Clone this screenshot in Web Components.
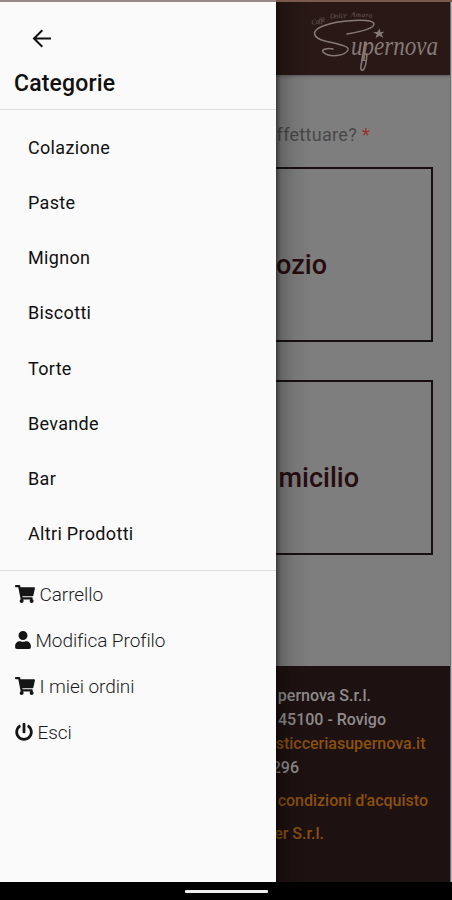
<!DOCTYPE html>
<html lang="it">
<head>
<meta charset="utf-8">
<title>Supernova</title>
<style>
html,body{margin:0;padding:0;background:#000}
body{width:452px;height:900px;overflow:hidden;font-family:Roboto,"Liberation Sans",sans-serif}
</style>
</head>
<body>
<app-shell>
  <side-drawer slot="drawer" heading="Categorie">
    <category-item>Colazione</category-item>
    <category-item>Paste</category-item>
    <category-item>Mignon</category-item>
    <category-item>Biscotti</category-item>
    <category-item>Torte</category-item>
    <category-item>Bevande</category-item>
    <category-item>Bar</category-item>
    <category-item>Altri Prodotti</category-item>
    <account-link slot="account" icon="cart">Carrello</account-link>
    <account-link slot="account" icon="user">Modifica Profilo</account-link>
    <account-link slot="account" icon="cart">I miei ordini</account-link>
    <account-link slot="account" icon="power">Esci</account-link>
  </side-drawer>
  <shop-page slot="page"></shop-page>
</app-shell>

<script>
const define = (name, html, setup) => customElements.define(name, class extends HTMLElement {
  constructor() {
    super();
    this.attachShadow({ mode: "open" }).innerHTML = html;
  }
  connectedCallback() { if (setup) setup(this, this.shadowRoot); }
});

const icons = {
  cart: ["0 0 576 512", 20, "M528.12 301.319l47.273-208C578.806 78.301 567.391 64 551.99 64H159.208l-9.166-44.81C147.758 8.021 137.93 0 126.529 0H24C10.745 0 0 10.745 0 24v16c0 13.255 10.745 24 24 24h69.883l70.248 343.435C147.325 417.1 136 435.222 136 456c0 30.928 25.072 56 56 56s56-25.072 56-56c0-15.674-6.447-29.835-16.824-40h209.647C430.447 426.165 424 440.326 424 456c0 30.928 25.072 56 56 56s56-25.072 56-56c0-22.172-12.888-41.332-31.579-50.405l5.517-24.276c3.413-15.018-8.002-29.319-23.403-29.319H218.117l-6.545-32h293.145c11.206 0 20.92-7.754 23.403-18.681z"],
  user: ["0 0 448 512", 16, "M224 256c70.7 0 128-57.3 128-128S294.7 0 224 0 96 57.3 96 128s57.3 128 128 128zm89.6 32h-16.7c-22.2 10.2-46.9 16-72.9 16s-50.6-5.8-72.9-16h-16.7C60.2 288 0 348.2 0 422.4V464c0 26.5 21.5 48 48 48h352c26.5 0 48-21.5 48-48v-41.6c0-74.2-60.2-134.4-134.4-134.4z"],
  power: ["0 0 512 512", 18, "M400 54.1c63 45 104 118.6 104 201.9 0 136.8-110.8 247.7-247.5 248C120 504.3 8.2 393 8 256.4 7.9 173.1 48.9 99.3 111.8 54.2c11.7-8.3 28-4.8 35 7.7L162.6 90c5.9 10.5 3.1 23.8-6.6 31-41.5 30.8-68 79.6-68 134.9-.1 92.3 74.5 168.1 168 168.1 91.6 0 168.6-74.2 168-169.1-.3-51.8-24.7-101.8-68.1-134-9.7-7.2-12.4-20.5-6.5-30.9l15.8-28.1c7-12.4 23.2-16.1 34.8-7.8zM296 264V24c0-13.3-10.7-24-24-24h-32c-13.3 0-24 10.7-24 24v240c0 13.3 10.7 24 24 24h32c13.3 0 24-10.7 24-24z"]
};

define("app-shell", `<style>
:host{display:flex;flex-direction:column;width:452px;height:900px;background:#000}
.top{height:2px;flex:none;background:linear-gradient(90deg,#998889 276px,#7c5a4b 276px)}
.body{height:880px;flex:none;display:grid;grid-template-columns:276px 174px 2px}
.edge{background:linear-gradient(90deg,#6f6f6f 1px,#b8b8b8 1px)}
.nav{flex:1;display:flex;justify-content:center;align-items:center;padding-top:1px}
.nav i{width:83px;height:3px;background:#eee;border-radius:1px}
</style><div class="top"></div><div class="body"><slot name="drawer"></slot><slot name="page"></slot><div class="edge"></div></div><div class="nav"><i></i></div>`);

define("side-drawer", `<style>
:host{display:flex;flex-direction:column;box-sizing:border-box;background:#fafafa;color:#111;min-width:0}
.back{display:block;width:20px;height:20px;margin:27px 0 0 32px}
h1{margin:21px 0 0 14px;font-size:23px;line-height:28px;font-weight:500;letter-spacing:.15px}
.cats{margin-top:11px;border-top:1px solid #dedede;border-bottom:1px solid #dedede;padding:10px 0 9px 28px;height:441px;display:flex;flex-direction:column}
.acc{display:flex;flex-direction:column;padding-left:14.5px}
</style>
<svg class="back" viewBox="0 0 20 20" fill="none" stroke="#111" stroke-width="2"><path d="M19 9.5H2.500M10.300 1.200L2 9.500l8.300 8.300"/></svg>
<h1></h1><div class="cats"><slot></slot></div><div class="acc"><slot name="account"></slot></div>`,
(el, r) => { r.querySelector("h1").textContent = el.getAttribute("heading"); });

define("category-item", `<style>
:host{display:flex;align-items:center;height:55.15px;flex:none;font-size:18px;letter-spacing:.32px;color:#111}
</style><span><slot></slot></span>`);

define("account-link", `<style>
:host{display:flex;align-items:center;height:46px;gap:5px;font-size:19px;letter-spacing:-.08px;font-weight:300;color:#1c1c1c;white-space:nowrap}
svg{height:18px;flex:none;fill:#151515}
</style><svg><path/></svg><span><slot></slot></span>`,
(el, r) => {
  const [box, w, d] = icons[el.getAttribute("icon")];
  const s = r.querySelector("svg");
  s.setAttribute("viewBox", box);
  s.style.width = w + "px";
  s.firstElementChild.setAttribute("d", d);
});

define("brand-logo", `<style>:host{display:block}svg{display:block}</style>
<svg width="174" height="73" viewBox="276 2 174 73" fill="none" stroke="#857a79" stroke-linecap="round">
<path stroke-width="1.5" d="M347 34C359 32 374 29 374 24C373 18 338 20 323 26C310 31 313 38 325 41C337 44 350 46 348 50C345 56 329 58 323 52C321 49 328 48 333 49"/>
<g fill="#857a79" stroke="none"><path d="M379.500 28.500L380.500 32.200L384.500 31.500L381.600 34.200L383.500 38L379.500 35.800L375.500 38.300L376.800 34.200L373 32.300L377.300 32Z"/>
<text x="351" y="55" font-family="Liberation Serif" font-style="italic" font-size="27" textLength="87" lengthAdjust="spacingAndGlyphs">upernova</text>
<g fill="#6c5f5d"><text transform="translate(312 25) rotate(-14)" font-family="Liberation Serif" font-style="italic" font-size="7" textLength="14">Caffè</text>
<text transform="translate(330 18.500) rotate(-4)" font-family="Liberation Serif" font-style="italic" font-size="7" textLength="17">Dolce</text>
<text transform="translate(351 16.500) rotate(3)" font-family="Liberation Serif" font-style="italic" font-size="7" textLength="21">Amaro</text></g></g>
<path stroke-width="1.6" d="M365 42L361 66Q360 71 363 70Q366 68 367 54"/>
</svg>`);

define("choice-box", `<style>
:host{display:flex;align-items:center;box-sizing:border-box;height:175px;width:157px;border:2px solid #180f10;border-left:0;color:#270c10;font-size:27px;font-weight:500;overflow:hidden;white-space:nowrap}
div{width:var(--end);display:flex;justify-content:flex-end;padding-top:20px}
</style><div><slot></slot></div>`);

define("footer-line", `<style>
:host{display:flex;justify-content:flex-end;width:var(--end);height:24px;line-height:24px;font-size:16px;font-weight:500;color:#8f8c8c;white-space:nowrap}
:host([link]){color:#8b5208}
</style><span><slot></slot></span>`);

define("shop-page", `<style>
:host{display:flex;flex-direction:column;background:#7e7e7e;overflow:hidden;position:relative}
header{height:73px;flex:none;background:#291815;box-shadow:0 1px 3px #3338}
main{flex:1;display:flex;flex-direction:column}
.q{display:flex;justify-content:flex-end;width:94px;margin-top:48px;height:24px;line-height:24px;font-size:18px;letter-spacing:.3px;white-space:nowrap;color:#484848;gap:5px}
.q b{color:#9c3029;font-weight:400}
choice-box.a{margin-top:20px}
choice-box.b{margin-top:38px}
footer{height:198px;flex:none;background:#1e1111;padding-top:18px;display:flex;flex-direction:column}
.gap{margin-top:9px}
.shade{position:absolute;inset:0 auto 0 0;width:36px;background:linear-gradient(90deg,#0008,#0003 5px,#0001 18px,#0000)}
</style>
<header><brand-logo></brand-logo></header>
<main><div class="q"><span>effettuare?</span><b>*</b></div>
<choice-box class="a" style="--end:51px">ozio</choice-box>
<choice-box class="b" style="--end:83px">micilio</choice-box></main>
<footer>
<footer-line style="--end:95px">pernova S.r.l.</footer-line>
<footer-line style="--end:110px">45100 - Rovigo</footer-line>
<footer-line link style="--end:149.500px">sticceriasupernova.it</footer-line>
<footer-line style="--end:23px">296</footer-line>
<footer-line link class="gap" style="--end:152px">condizioni d'acquisto</footer-line>
<footer-line link class="gap" style="--end:48px">er S.r.l.</footer-line>
</footer><div class="shade"></div>`);
</script>
</body>
</html>
